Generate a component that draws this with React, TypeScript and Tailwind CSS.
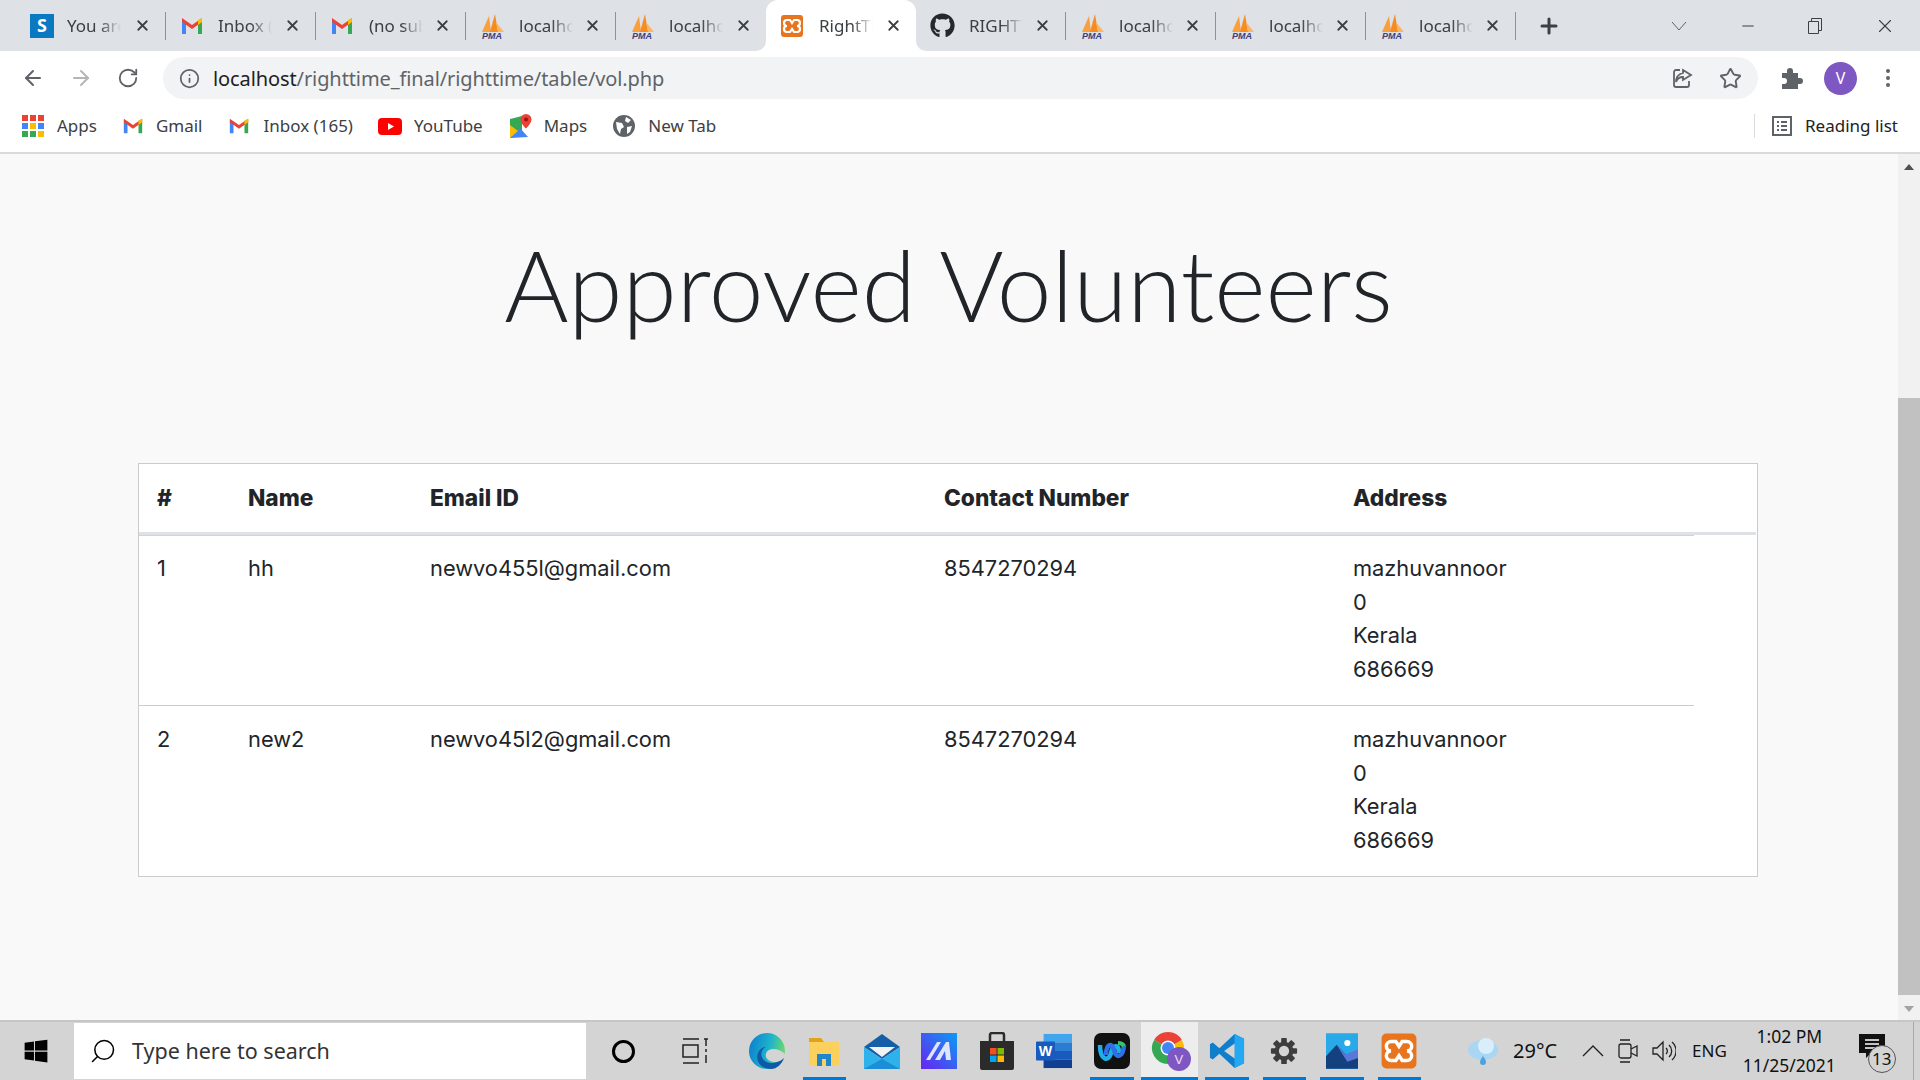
import { ArrowLeft, ArrowRight, Info, Minus, Plus, RotateCw, Search, Star, X } from "lucide-react";
import { FaGithub, FaWindows } from "react-icons/fa";

const uiFont = "font-['Noto_Sans',sans-serif]";

function GmailIcon({ size = 22 }: { size?: number }) {
  return (
    <svg width={size} height={size} viewBox="0 0 24 24">
      <path d="M2 6v14h4V10z" fill="#4285f4" />
      <path d="M18 10v10h4V6z" fill="#34a853" />
      <path d="M2 4v4l10 7 10-7V4l-10 7z" fill="#ea4335" />
      <path d="M18 6l4-2v4l-4 3z" fill="#fbbc04" />
    </svg>
  );
}

function PmaIcon() {
  return (
    <svg width="28" height="28" viewBox="0 0 28 28">
      <path d="M2 20L9 4l2 16z" fill="#f9a03c" />
      <path d="M10 20l5-18 3 18z" fill="#f68b1f" />
      <path d="M18 20l-2-10 8 10z" fill="#fbb563" />
      <text x="2" y="27" fontSize="9" fontWeight="700" fontStyle="italic" fill="#3c3f7a" fontFamily="Liberation Sans">PMA</text>
    </svg>
  );
}

function XamppIcon({ size = 24 }: { size?: number }) {
  return (
    <svg width={size} height={size} viewBox="0 0 24 24">
      <rect x="1" y="1" width="22" height="22" rx="3" fill="#e8741e" />
      <path d="M7 6h3l2 3 2-3h3a2 2 0 0 1 0 6 2 2 0 0 1 0 6h-3l-2-3-2 3H7a2 2 0 0 1 0-6 2 2 0 0 1 0-6z" fill="none" stroke="#fff" strokeWidth="2.2" />
    </svg>
  );
}

const tabs = [
  { title: "You are", icon: <span className="flex h-6 w-6 items-center justify-center bg-[#0b78c2] text-[18px] font-bold text-white">S</span>, iconBox: "w-[37px]" },
  { title: "Inbox (", icon: <GmailIcon size={24} />, iconBox: "w-[38px]" },
  { title: "(no subj", icon: <GmailIcon size={24} />, iconBox: "w-[39px]" },
  { title: "localhost", icon: <PmaIcon />, iconBox: "w-[39px]" },
  { title: "localhost", icon: <PmaIcon />, iconBox: "w-[39px]" },
  { title: "RightTi", icon: <XamppIcon />, iconBox: "w-[39px]", active: true },
  { title: "RIGHTT", icon: <FaGithub size={25} color="#24292e" />, iconBox: "w-[39px]" },
  { title: "localhost", icon: <PmaIcon />, iconBox: "w-[39px]" },
  { title: "localhost", icon: <PmaIcon />, iconBox: "w-[39px]" },
  { title: "localhost", icon: <PmaIcon />, iconBox: "w-[39px]" },
];

function BrowserTab({ title, icon, iconBox, active, narrow }: { title: string; icon: React.ReactNode; iconBox: string; active?: boolean; narrow: boolean }) {
  return (
    <div className={`relative flex h-[51px] shrink-0 items-center pl-[14px] pr-[14px] ${narrow ? "w-[149px]" : "w-[150px]"} ${active ? "rounded-t-xl bg-white" : ""}`}>
      {active && (
        <>
          <svg width="10" height="10" viewBox="0 0 10 10" className="absolute bottom-0 left-[-10px]"><path d="M10 0v10H0a10 10 0 0 0 10-10z" fill="#fff" /></svg>
          <svg width="10" height="10" viewBox="0 0 10 10" className="absolute bottom-0 right-[-10px]"><path d="M0 0v10h10A10 10 0 0 1 0 0z" fill="#fff" /></svg>
        </>
      )}
      <span className={`flex shrink-0 items-center ${iconBox}`}>{icon}</span>
      <span className="w-[54px] overflow-hidden whitespace-nowrap text-[17px] text-[#3c4043] [mask-image:linear-gradient(to_right,black_60%,transparent)]">{title}</span>
      <X className="ml-auto text-[#3c4043]" size={17} strokeWidth={2.5} />
    </div>
  );
}

function TabStrip() {
  return (
    <div className="flex h-[51px] shrink-0 items-center bg-[#dee1e6] pl-[16px]">
      {tabs.map((t, i) => {
        const hasSeparator = !t.active && tabs[i + 1]?.active !== true;
        return (
          <div key={i} className="flex items-center">
            <BrowserTab title={t.title} icon={t.icon} iconBox={t.iconBox} active={t.active} narrow={hasSeparator} />
            {hasSeparator && <div className="h-[28px] w-px bg-[#8e9196]" />}
          </div>
        );
      })}
      <Plus className="ml-[21px] text-[#3c4043]" size={24} strokeWidth={3} />
      <div className="ml-auto flex items-center text-[#3c4043]">
        <svg width="16" height="10" viewBox="0 0 16 10" className="mr-[52px]"><path d="M1 1l7 8 7-8" fill="none" stroke="#5f6368" /></svg>
        <Minus size={18} strokeWidth={1.5} className="mr-[50px]" />
        <svg width="16" height="18" viewBox="0 0 16 18" className="mr-[51px]"><path d="M1.5 4.5h10v12h-10zM4.5 4.5v-3h10v12h-3" fill="none" stroke="#3c4043" /></svg>
        <X size={22} strokeWidth={1.2} className="mr-[24px]" />
      </div>
    </div>
  );
}

function Toolbar() {
  return (
    <div className="flex h-[52px] shrink-0 items-center bg-white pt-[2px]">
      <ArrowLeft className="ml-[21px] text-[#5f6368]" size={24} />
      <ArrowRight className="ml-[24px] text-[#b4b6b9]" size={24} />
      <RotateCw className="ml-[24px] text-[#5f6368]" size={22} />
      <div className="ml-[24px] flex h-[42px] w-[1595px] shrink-0 items-center rounded-full bg-[#f1f3f4] pl-[16px]">
        <Info className="text-[#5f6368]" size={21} />
        <span className="ml-[13px] mt-[1px] text-[20px] tracking-[-0.1px] text-[#5f6368]"><span className="text-[#202124]">localhost</span>/righttime_final/righttime/table/vol.php</span>
        <svg width="24" height="24" viewBox="0 0 24 24" fill="none" stroke="#5f6368" strokeWidth="1.8" className="ml-auto mr-[25px]">
          <path d="M10 4H6a2 2 0 0 0-2 2v13a2 2 0 0 0 2 2h11a2 2 0 0 0 2-2v-4M13 4l8 5-8 5v-3c-4 0-6 2-7 5 0-5 3-8 7-9z" />
        </svg>
        <Star className="mr-[16px] text-[#5f6368]" size={23} strokeWidth={2} />
      </div>
      <svg width="24" height="24" viewBox="0 0 24 24" className="ml-[21px] shrink-0">
        <path d="M3 7h5V5a3 3 0 0 1 6 0v2h5v5h2a3 3 0 0 1 0 6h-2v5H3v-5h2a3 3 0 0 0 0-6H3z" fill="#5f6368" />
      </svg>
      <span className="ml-[21px] flex h-[33px] w-[33px] shrink-0 items-center justify-center rounded-full bg-[#7e57c2] text-[16px] text-white">V</span>
      <span className="ml-[29px] flex flex-col gap-[3px]">
        <span className="h-1 w-1 rounded-full bg-[#5f6368]" />
        <span className="h-1 w-1 rounded-full bg-[#5f6368]" />
        <span className="h-1 w-1 rounded-full bg-[#5f6368]" />
      </span>
    </div>
  );
}

function AppsIcon() {
  const colors = ["#ea4335", "#ea4335", "#ea4335", "#4285f4", "#fbbc04", "#4285f4", "#34a853", "#34a853", "#fbbc04"];
  return (
    <span className="grid h-[22px] w-[22px] grid-cols-3 gap-[2px]">
      {colors.map((c, i) => (
        <span key={i} className="h-[6px] w-[6px]" style={{ backgroundColor: c }} />
      ))}
    </span>
  );
}

function YoutubeIcon() {
  return (
    <svg width="24" height="24" viewBox="0 0 24 24">
      <rect y="4" width="24" height="17" rx="4" fill="#f00" />
      <path d="M10 9l6 3.5-6 3.5z" fill="#fff" />
    </svg>
  );
}

function MapsIcon() {
  return (
    <svg width="24" height="26" viewBox="0 0 24 26">
      <path d="M2 6l12-3v20L2 25z" fill="#34a853" />
      <path d="M2 25l10-10 8 9z" fill="#4285f4" />
      <path d="M2 12l8 6-8 7z" fill="#fbbc04" />
      <path d="M18 1a5.500 5.500 0 0 1 5.500 5.500c0 4-5.500 9-5.500 9s-5.500-5-5.500-9A5.500 5.500 0 0 1 18 1z" fill="#ea4335" />
      <circle cx="18" cy="6.500" r="2" fill="#a50e0e" />
    </svg>
  );
}

function GlobeIcon() {
  return (
    <svg width="24" height="24" viewBox="0 0 24 24">
      <circle cx="12" cy="12" r="11" fill="#5f6368" />
      <path d="M4 8l6 1 2 4-3 2-1 5-3-5zM14 3l5 3-3 3-3-2zM15 13l5-1-2 6-3 2z" fill="#fff" />
    </svg>
  );
}

const bookmarks = [
  { label: "Apps", icon: <AppsIcon />, gap: "w-[35px]" },
  { label: "Gmail", icon: <GmailIcon />, gap: "w-[34px]" },
  { label: "Inbox (165)", icon: <GmailIcon />, gap: "w-[36px]" },
  { label: "YouTube", icon: <YoutubeIcon />, gap: "w-[36px]" },
  { label: "Maps", icon: <MapsIcon />, gap: "w-[36px]" },
  { label: "New Tab", icon: <GlobeIcon />, gap: "w-[36px]" },
];

function BookmarkBar() {
  return (
    <div className="flex h-[51px] shrink-0 items-center border-b-2 border-[#dadada] bg-white pb-[3px] pl-[22px]">
      {bookmarks.map((b) => (
        <div key={b.label} className="mr-[25px] flex items-center">
          <span className={`flex shrink-0 items-center ${b.gap}`}>{b.icon}</span>
          <span className="text-[17px] text-[#3c4043]">{b.label}</span>
        </div>
      ))}
      <div className="ml-auto flex h-[24px] items-center border-l border-[#dadce0] pr-[22px]">
        <svg width="22" height="22" viewBox="0 0 22 22" fill="none" stroke="#5f6368" strokeWidth="2" className="ml-[16px]">
          <rect x="2" y="2" width="18" height="18" />
          <path d="M6 7h2M6 11h2M6 15h2M10 7h6M10 11h6M10 15h6" />
        </svg>
        <span className="ml-[12px] text-[17px] text-[#202124]">Reading list</span>
      </div>
    </div>
  );
}

const volunteers = [
  { id: 1, name: "hh", email: "newvo455l@gmail.com" },
  { id: 2, name: "new2", email: "newvo45l2@gmail.com" },
];

function VolunteerTable() {
  return (
    <div className="ml-[138px] w-[1620px] border border-[#cccccc] bg-white text-[21.8px] leading-[33.6px] text-[#212529]">
      <div className="grid h-[71px] w-[1617px] grid-cols-[91px_182px_514px_409px_1fr] items-center border-b-[3px] border-[#dee2e6] pl-[18px] text-[22.7px] font-extrabold">
        <span>#</span>
        <span>Name</span>
        <span>Email ID</span>
        <span>Contact Number</span>
        <span>Address</span>
      </div>
      {volunteers.map((v, i) => (
        <div key={v.id} className={`grid w-[1555px] grid-cols-[91px_182px_514px_409px_1fr] pl-[18px] ${i === 0 ? "h-[171px] border-y border-t-[#ced4da] border-b-[#cccccc] pt-[16px]" : "h-[170px] pt-[17px]"}`}>
          <span>{v.id}</span>
          <span>{v.name}</span>
          <span>{v.email}</span>
          <span>8547270294</span>
          <span>
            mazhuvannoor<br />0<br />Kerala<br />686669
          </span>
        </div>
      ))}
    </div>
  );
}

function Scrollbar() {
  return (
    <div className="flex w-[22px] shrink-0 flex-col bg-[#f1f1f1]">
      <div className="flex h-[25px] items-center justify-center">
        <svg width="10" height="6" viewBox="0 0 10 6"><path d="M5 0l5 6H0z" fill="#505050" /></svg>
      </div>
      <div className="mt-[219px] h-[597px] bg-[#c1c1c1]" />
      <div className="mt-auto flex h-[22px] items-center justify-center">
        <svg width="10" height="6" viewBox="0 0 10 6"><path d="M5 6l5-6H0z" fill="#a3a3a3" /></svg>
      </div>
    </div>
  );
}

function Page() {
  return (
    <div className="flex min-h-0 flex-1 bg-[#f9f9f9]">
      <div className="flex-1 font-['Inter',sans-serif]">
        <h1 className="pr-[1px] pt-[68px] text-center font-['Lato',sans-serif] text-[98.3px] font-light leading-[125px] text-[#212529]">Approved Volunteers</h1>
        <div className="mt-[116px]">
          <VolunteerTable />
        </div>
      </div>
      <Scrollbar />
    </div>
  );
}

function EdgeIcon() {
  return (
    <svg width="36" height="36" viewBox="0 0 36 36">
      <defs>
        <linearGradient id="edge" x1="0" y1="0.2" x2="1" y2="0.4">
          <stop offset="0" stopColor="#0c7fd0" />
          <stop offset="0.6" stopColor="#1fb5c9" />
          <stop offset="1" stopColor="#6ed86a" />
        </linearGradient>
      </defs>
      <circle cx="18" cy="18" r="18" fill="url(#edge)" />
      <path d="M36 21C31 16 24 15 20 17c-5 3-4 9 1 11 5 2 10 2 15-2z" fill="#d4d4d4" />
      <path d="M22 36C12 36 6 28 9 20c1-3 4-6 8-6-5 2-6 8-3 12 3 4 8 5 14 3 3-1 5-2 7-4-2 6-7 11-13 11z" fill="#0f5aa8" />
    </svg>
  );
}

function ExplorerIcon() {
  return (
    <svg width="32" height="32" viewBox="0 0 32 32">
      <path d="M1 3h12l3 4H1z" fill="#e0a31a" />
      <rect x="1" y="7" width="30" height="24" rx="1" fill="#fcd05c" />
      <path d="M9 31V19h14v12h-5v-7h-4v7z" fill="#1f86c9" />
    </svg>
  );
}

function MailIcon() {
  return (
    <svg width="36" height="36" viewBox="0 0 36 36">
      <path d="M0 14L18 1l18 13L18 26z" fill="#155ea8" />
      <path d="M5 14h26L18 24z" fill="#f2f2f2" />
      <path d="M0 14l18 12 18-12v22H0z" fill="#2fb2ec" />
      <path d="M36 36H0l18-10z" fill="#1a8ed6" />
    </svg>
  );
}

function MaIcon() {
  return (
    <svg width="36" height="36" viewBox="0 0 36 36">
      <defs>
        <linearGradient id="ma" x1="0" y1="1" x2="1" y2="0">
          <stop offset="0" stopColor="#6a22f0" />
          <stop offset="1" stopColor="#0a9cf5" />
        </linearGradient>
      </defs>
      <rect width="36" height="36" fill="url(#ma)" />
      <path d="M5 27L16 9h4L9 27zM14 27L25 9h3l2 18h-5l-1-9-5 9z" fill="#dfe4ff" />
    </svg>
  );
}

function StoreIcon() {
  return (
    <svg width="36" height="38" viewBox="0 0 36 38">
      <path d="M11 9V3a2 2 0 0 1 2-2h10a2 2 0 0 1 2 2v6" fill="none" stroke="#2b2b2b" strokeWidth="2.5" />
      <path d="M1 9h34v27a2 2 0 0 1-2 2H3a2 2 0 0 1-2-2z" fill="#2b2b2b" />
      <rect x="11" y="16" width="6.5" height="6.5" fill="#f25022" />
      <rect x="18.5" y="16" width="6.5" height="6.5" fill="#7fba00" />
      <rect x="11" y="23.500" width="6.5" height="6.5" fill="#00a4ef" />
      <rect x="18.5" y="23.500" width="6.5" height="6.5" fill="#ffb900" />
    </svg>
  );
}

function WordIcon() {
  return (
    <svg width="36" height="36" viewBox="0 0 38 36">
      <rect x="8" y="0" width="30" height="9" fill="#41a5ee" />
      <rect x="8" y="9" width="30" height="9" fill="#2b7cd3" />
      <rect x="8" y="18" width="30" height="9" fill="#185abd" />
      <rect x="8" y="27" width="30" height="9" fill="#103f91" />
      <rect x="0" y="8" width="20" height="20" rx="1" fill="#185abd" />
      <text x="3" y="23" fontSize="15" fontWeight="700" fill="#fff" fontFamily="Liberation Sans">W</text>
    </svg>
  );
}

function WebexIcon() {
  return (
    <svg width="36" height="36" viewBox="0 0 36 36">
      <rect width="36" height="36" rx="7" fill="#111" />
      <path d="M6 12c0 16 9 17 11 8 2-9 8-9 8 0" fill="none" stroke="#1db0e8" strokeWidth="4.500" />
      <path d="M12 22c0-11 6-13 8-5 2 9 9 8 10-5" fill="none" stroke="#2f6fe8" strokeWidth="4.500" />
      <path d="M24 10c3 0 5 1 6 3" fill="none" stroke="#35c46a" strokeWidth="4" />
    </svg>
  );
}

function ChromeIcon() {
  return (
    <svg width="40" height="40" viewBox="0 0 40 40" className="ml-[3px]">
      <path d="M17 17L3.100 9A16 16 0 0 1 30.900 9z" fill="#ea4335" />
      <path d="M17 17L30.900 9A16 16 0 0 1 17 33z" fill="#fbbc04" />
      <path d="M17 17V33A16 16 0 0 1 3.100 9z" fill="#34a853" />
      <circle cx="17" cy="17" r="7.500" fill="#fff" />
      <circle cx="17" cy="17" r="6" fill="#4285f4" />
      <circle cx="28" cy="28" r="12" fill="#7e57c2" />
      <text x="23.500" y="33" fontSize="13" fill="#e8dff5" fontFamily="Liberation Sans">V</text>
    </svg>
  );
}

function VscodeIcon() {
  return (
    <svg width="36" height="36" viewBox="0 0 38 38">
      <path d="M27 1l10 5v26l-10 5L11 22 4 28l-3-2V12l3-2 7 6z" fill="#0f7fcc" />
      <path d="M27 1l10 5v26l-10 5z" fill="#23a9f2" />
      <path d="M27 11L16 19l11 8z" fill="#d4d4d4" />
    </svg>
  );
}

function GearIcon() {
  const teeth = [0, 45, 90, 135];
  return (
    <svg width="28" height="28" viewBox="0 0 30 30">
      {teeth.map((t) => (
        <rect key={t} x="12" y="1" width="6" height="28" rx="1" fill="#3d3d3d" transform={`rotate(${t} 15 15)`} />
      ))}
      <circle cx="15" cy="15" r="10" fill="#3d3d3d" />
      <circle cx="15" cy="15" r="5.5" fill="#d4d4d4" />
    </svg>
  );
}

function PhotosIcon() {
  return (
    <svg width="32" height="36" viewBox="0 0 36 40">
      <rect width="36" height="40" fill="#29a9e8" />
      <circle cx="24" cy="11" r="3.500" fill="#fff" />
      <path d="M0 40V26L12 13l12 13 12 2v12z" fill="#15407e" />
      <path d="M12 13l10 11 14-6v10L24 32z" fill="#5a78d8" />
    </svg>
  );
}

const taskbarApps = [
  { icon: <EdgeIcon />, running: false },
  { icon: <ExplorerIcon />, running: true },
  { icon: <MailIcon />, running: false },
  { icon: <MaIcon />, running: false },
  { icon: <StoreIcon />, running: false },
  { icon: <WordIcon />, running: false },
  { icon: <WebexIcon />, running: true },
  { icon: <ChromeIcon />, running: true, active: true },
  { icon: <VscodeIcon />, running: true },
  { icon: <GearIcon />, running: true },
  { icon: <PhotosIcon />, running: true },
  { icon: <XamppIcon size={38} />, running: true },
];

function Taskbar() {
  return (
    <div className={`flex h-[60px] shrink-0 items-center border-t-2 border-[#c6c6c6] bg-[#d4d4d4] ${uiFont}`}>
      <FaWindows className="ml-[23px] shrink-0 text-black" size={26} />
      <div className="ml-[25px] flex h-[56px] w-[512px] shrink-0 items-center bg-white pl-[15px]">
        <Search className="-scale-x-100 text-black" size={28} strokeWidth={1.3} />
        <span className="ml-[15px] mt-[1px] text-[21.5px] text-[#333]">Type here to search</span>
      </div>
      <span className="ml-[26px] h-[23px] w-[23px] shrink-0 rounded-full border-[3.5px] border-black" />
      <svg width="28" height="26" viewBox="0 0 28 26" fill="none" stroke="#222" strokeWidth="1.5" className="ml-[47px] shrink-0">
        <path d="M1 1h16M1 7h15v12H1zM1 25h16M22 1h4M24 1v7M24 11v3M24 17v8" />
      </svg>
      <div className="ml-[28px] flex h-full shrink-0 items-center">
        {taskbarApps.map((a, i) => (
          <div key={i} className={`relative flex h-full w-[57.5px] shrink-0 items-center justify-center ${a.active ? "bg-[#ededed]" : ""}`}>
            {a.icon}
            {a.running && <span className={`absolute bottom-0 h-[3px] bg-[#0078d4] ${a.active ? "left-0 right-0" : "left-[7px] right-[7px]"}`} />}
          </div>
        ))}
      </div>
      <svg width="34" height="28" viewBox="0 0 34 28" className="ml-[38px] shrink-0">
        <ellipse cx="17" cy="13" rx="15" ry="10" fill="#a9d6f2" />
        <circle cx="20" cy="9" r="8" fill="#d8eefb" />
        <path d="M17 19c2 3 3 4 3 6a3 3 0 0 1-6 0c0-2 1-3 3-6z" fill="#4aa3df" />
      </svg>
      <span className="ml-[13px] text-[20px] text-[#111]">29°C</span>
      <svg width="22" height="12" viewBox="0 0 22 12" fill="none" stroke="#222" strokeWidth="1.4" className="ml-[25px] shrink-0"><path d="M1 11l10-10 10 10" /></svg>
      <svg width="22" height="24" viewBox="0 0 22 24" fill="none" stroke="#222" strokeWidth="1.3" className="ml-[13px] shrink-0">
        <rect x="2" y="5" width="12" height="14" rx="2" />
        <path d="M14 10l6-3v10l-6-3M3 1h10M3 23h10" />
      </svg>
      <svg width="24" height="22" viewBox="0 0 24 22" fill="none" stroke="#222" strokeWidth="1.3" className="ml-[13px] shrink-0">
        <path d="M1 8h4l6-6v18l-6-6H1zM14 8a4 4 0 0 1 0 6M17 5a8 8 0 0 1 0 12M20 2a12 12 0 0 1 0 18" />
      </svg>
      <span className="ml-[16px] text-[17px] text-[#111]">ENG</span>
      <div className="ml-[15px] flex w-[95px] shrink-0 flex-col items-center text-[17.5px] leading-[29px] text-[#111]">
        <span>1:02 PM</span>
        <span>11/25/2021</span>
      </div>
      <div className="relative ml-[22px] h-[34px] w-[30px] shrink-0">
        <svg width="26" height="24" viewBox="0 0 26 24">
          <path d="M0 0h26v19H12l-5 5v-5H0z" fill="#111" />
          <path d="M6 6h14M6 10h14M6 14h14" stroke="#fff" strokeWidth="1.5" />
        </svg>
        <span className="absolute left-[9px] top-[11px] flex h-[28px] w-[28px] items-center justify-center rounded-full border border-[#555] bg-[#d4d4d4] text-[17px] text-[#111]">13</span>
      </div>
      <span className="ml-auto mr-[6px] h-full w-px bg-[#a8a8a8]" />
    </div>
  );
}

export default function App() {
  return (
    <div className={`flex h-screen flex-col overflow-hidden bg-white ${uiFont}`}>
      <TabStrip />
      <Toolbar />
      <BookmarkBar />
      <Page />
      <Taskbar />
    </div>
  );
}
